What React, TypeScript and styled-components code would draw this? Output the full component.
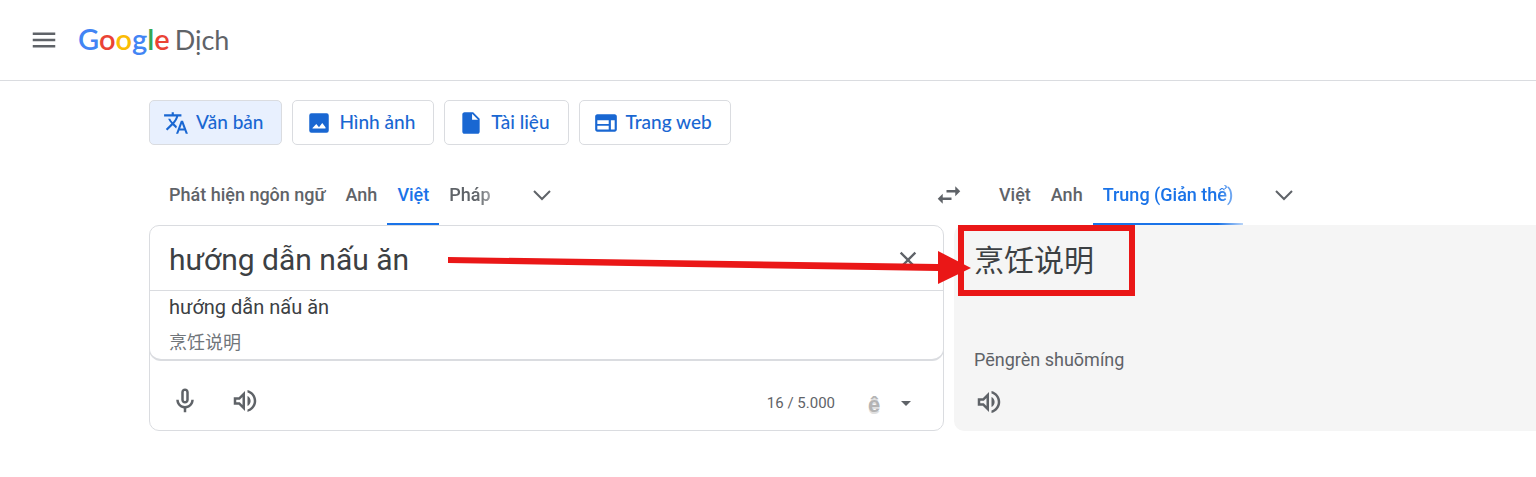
import React from 'react';
import styled, { createGlobalStyle } from 'styled-components';

const GlobalStyle = createGlobalStyle`
  *, *::before, *::after { box-sizing: border-box; }
  body {
    margin: 0;
    background: #fff;
    color: #3c4043;
    font-family: Roboto, 'Noto Sans CJK SC', sans-serif;
    overflow-x: hidden;
  }
  button, textarea { font-family: inherit; color: inherit; }
`;

const Header = styled.header`
  display: flex;
  align-items: center;
  gap: 19px;
  height: 81px;
  padding: 0 29px;
  border-bottom: 1px solid #dadce0;
`;

const IconButton = styled.button<{ $width?: number }>`
  display: flex;
  align-items: center;
  justify-content: center;
  width: ${(p) => p.$width ?? 30}px;
  height: 30px;
  padding: 0;
  border: 0;
  background: none;
  color: #5f6368;
  cursor: pointer;
`;

const Logo = styled.a`
  display: flex;
  align-items: baseline;
  gap: 5px;
  padding-bottom: 2px;
  color: #5f6368;
  font-family: Lato, sans-serif;
  font-size: 27px;
  line-height: 38px;
  text-decoration: none;
`;

const Brand = styled.span`
  font-size: 29px;
  font-weight: 600;
`;

const Letter = styled.span<{ $color: string }>`
  color: ${(p) => p.$color};
`;

const Main = styled.main`
  padding: 19px 0 40px 149px;
`;

const Modes = styled.nav`
  display: flex;
  gap: 10px;
`;

const ModeButton = styled.button<{ $active?: boolean }>`
  display: flex;
  align-items: center;
  gap: 7px;
  height: 45px;
  padding: 0 18px 0 13px;
  border: 1px solid #dadce0;
  border-radius: 5px;
  background: ${(p) => (p.$active ? '#e8f0fe' : '#fff')};
  color: #1967d2;
  font-family: Lato, sans-serif;
  font-size: 19px;
  font-weight: 500;
  white-space: nowrap;
  cursor: pointer;
`;

const ModeLabel = styled.span`
  padding-bottom: 2px;
`;

const Columns = styled.div`
  display: grid;
  grid-template-columns: 795fr 582fr;
  column-gap: 10px;
`;

const LanguageBar = styled.div<{ $start: number }>`
  display: flex;
  align-items: flex-end;
  height: 80px;
  padding-left: ${(p) => p.$start}px;
`;

const LanguageTab = styled.button<{ $active?: boolean; $fade?: boolean }>`
  height: 60px;
  padding: 0 10px;
  border: 0;
  border-bottom: 2px solid ${(p) => (p.$active ? '#1a73e8' : 'transparent')};
  background: none;
  color: ${(p) => (p.$active ? '#1a73e8' : '#5f6368')};
  font-size: 18px;
  font-weight: 500;
  white-space: nowrap;
  cursor: pointer;
  ${(p) => p.$fade && 'mask-image: linear-gradient(to right, #000 calc(100% - 25px), rgba(0, 0, 0, 0.3));'}
`;

const BarSlot = styled.div<{ $push?: boolean }>`
  display: flex;
  align-items: center;
  height: 60px;
  margin: ${(p) => (p.$push ? '0 -20px 0 auto' : '0 0 0 26px')};
`;

const Source = styled.section`
  display: flex;
  flex-direction: column;
  border: 1px solid #dadce0;
  border-radius: 10px;
`;

const InputRow = styled.div`
  display: flex;
  align-items: center;
  gap: 20px;
  height: 65px;
  padding: 4px 20px 0 19px;
  border-bottom: 1px solid #dadce0;
`;

const SourceText = styled.textarea`
  flex: 1;
  min-width: 0;
  height: 40px;
  padding: 0;
  border: 0;
  outline: 0;
  resize: none;
  overflow: hidden;
  background: none;
  font-size: 30px;
  line-height: 40px;
`;

const Suggestion = styled.button`
  display: flex;
  flex-direction: column;
  gap: 6px;
  height: 70px;
  margin: 0 -1px;
  padding: 2px 19px 0;
  border: 1px solid #dadce0;
  border-width: 0 1px 2px;
  border-radius: 0 0 12px 12px;
  background: #fff;
  text-align: left;
  font-size: 20px;
  line-height: 28px;
  cursor: pointer;
`;

const SuggestionHint = styled.span`
  color: #70757a;
  font-family: 'Noto Sans CJK SC', sans-serif;
  font-size: 18px;
  line-height: 28px;
`;

const Toolbar = styled.div`
  display: flex;
  align-items: center;
  height: 69px;
  padding: 10px 22px 0 20px;
`;

const ToolGroup = styled.div<{ $gap: number; $end?: boolean }>`
  display: flex;
  align-items: center;
  gap: ${(p) => p.$gap}px;
  margin-left: ${(p) => (p.$end ? 'auto' : 0)};
  padding-top: ${(p) => (p.$end ? 4 : 0)}px;
`;

const Counter = styled.span`
  color: #5f6368;
  font-size: 15px;
`;

const KeyboardGlyph = styled.span`
  padding-top: 4px;
  color: #b4b4b4;
  font-family: 'Liberation Sans', sans-serif;
  font-size: 22px;
  font-weight: 700;
  line-height: 20px;
  text-shadow: 0 2px 0 #e0e0e0;
`;

const Result = styled.section`
  position: relative;
  display: flex;
  flex-direction: column;
  padding: 13px 20px 14px;
  border-radius: 10px 0 0 10px;
  background: #f5f5f5;
`;

const Translation = styled.p`
  margin: 0;
  font-family: 'Noto Sans CJK SC', sans-serif;
  font-size: 30px;
  line-height: 40px;
`;

const Romanization = styled.p`
  margin: auto 0 15px;
  color: #5f6368;
  font-size: 18px;
  line-height: 24px;
`;

const Highlight = styled.div`
  position: absolute;
  top: 0;
  left: 4px;
  width: 177px;
  height: 71px;
  border: 6px solid #ea1717;
  pointer-events: none;
`;

const Arrow = styled.svg`
  position: absolute;
  top: 20px;
  left: -506px;
  pointer-events: none;
`;

const Glyph = styled.svg`
  flex-shrink: 0;
`;

const Icon = ({ path, size = 30 }: { path: string; size?: number }) => (
  <Glyph width={size} height={size} viewBox="0 0 24 24" fill="currentColor" fillRule="evenodd" aria-hidden="true">
    <path d={path} />
  </Glyph>
);

const icons = {
  menu: 'M3 18h18v-2H3v2zm0-5h18v-2H3v2zm0-7v2h18V6H3z',
  translate:
    'M12.87 15.07l-2.54-2.51.03-.03c1.74-1.94 2.98-4.17 3.71-6.53H17V4h-7V2H8v2H1v1.99h11.17C11.5 7.92 10.44 9.75 9 11.35 8.07 10.32 7.3 9.19 6.69 8h-2c.73 1.63 1.73 3.17 2.98 4.56l-5.09 5.02L4 19l5-5 3.11 3.11.76-2.04zM18.5 10h-2L12 22h2l1.12-3h4.75L21 22h2l-4.5-12zm-2.62 7l1.62-4.33L19.12 17h-3.24z',
  image:
    'M5 3h14a2 2 0 0 1 2 2v14a2 2 0 0 1-2 2H5a2 2 0 0 1-2-2V5a2 2 0 0 1 2-2zM6 17h12v-1l-3-4-3 4-2.500-3L6 16.500z',
  file: 'M6 2c-1.100 0-2 .9-2 2v16c0 1.100.9 2 2 2h12c1.100 0 2-.9 2-2V8l-6-6H6zm7 7V3.500L18.500 9H13z',
  web: 'M20 4H4c-1.100 0-2 .9-2 2v12c0 1.100.9 2 2 2h16c1.100 0 2-.9 2-2V6c0-1.100-.9-2-2-2zM14.500 18H4v-3.500h10.500V18zm0-5H4V9.500h10.500V13zM20 18h-3.500V9.500H20V18z',
  swap: 'M6.990 11L3 15l3.990 4v-3H14v-2H6.990v-3zM21 9l-3.990-4v3H10v2h7.010v3L21 9z',
  mic: 'M12 14c1.660 0 3-1.340 3-3V5c0-1.660-1.340-3-3-3S9 3.340 9 5v6c0 1.660 1.340 3 3 3zM11 5c0-.55.45-1 1-1s1 .45 1 1v6c0 .55-.45 1-1 1s-1-.45-1-1V5zM17 11c0 2.760-2.240 5-5 5s-5-2.240-5-5H5c0 3.530 2.610 6.430 6 6.920V21h2v-3.080c3.390-.49 6-3.390 6-6.920h-2z',
  speaker:
    'M3 9v6h4l5 5V4L7 9H3zm7-.17v6.34L7.830 13H5v-2h2.830L10 8.830zM16.500 12c0-1.770-1.020-3.290-2.500-4.030v8.050c1.480-.73 2.500-2.250 2.500-4.020zM14 3.230v2.060c2.890.86 5 3.540 5 6.710s-2.110 5.850-5 6.710v2.060c4.010-.91 7-4.490 7-8.770s-2.990-7.860-7-8.770z',
  caret: 'M7 10l5 5 5-5z',
  close: 'M19 6.410L17.590 5 12 10.590 6.410 5 5 6.410 10.590 12 5 17.590 6.410 19 12 13.410 17.590 19 19 17.590 13.410 12z',
};

const Chevron = () => (
  <svg width="18" height="12" viewBox="0 0 18 12" fill="none" stroke="currentColor" strokeWidth="2" aria-hidden="true">
    <path d="M1 2l8 8 8-8" />
  </svg>
);

const modes = [
  { label: 'Văn bản', icon: icons.translate, active: true },
  { label: 'Hình ảnh', icon: icons.image },
  { label: 'Tài liệu', icon: icons.file },
  { label: 'Trang web', icon: icons.web },
];

const brandLetters: [string, string][] = [
  ['G', '#4285f4'],
  ['o', '#ea4335'],
  ['o', '#fbbc04'],
  ['g', '#4285f4'],
  ['l', '#34a853'],
  ['e', '#ea4335'],
];

export default function App() {
  return (
    <>
      <GlobalStyle />
      <Header>
        <IconButton aria-label="Menu">
          <Icon path={icons.menu} />
        </IconButton>
        <Logo href="#">
          <Brand>
            {brandLetters.map(([letter, color], i) => (
              <Letter key={i} $color={color}>{letter}</Letter>
            ))}
          </Brand>
          <span>Dịch</span>
        </Logo>
      </Header>

      <Main>
        <Modes>
          {modes.map((m) => (
            <ModeButton key={m.label} $active={m.active}>
              <Icon path={m.icon} size={26} />
              <ModeLabel>{m.label}</ModeLabel>
            </ModeButton>
          ))}
        </Modes>

        <Columns>
          <LanguageBar $start={10}>
            <LanguageTab>Phát hiện ngôn ngữ</LanguageTab>
            <LanguageTab>Anh</LanguageTab>
            <LanguageTab $active>Việt</LanguageTab>
            <LanguageTab $fade>Pháp</LanguageTab>
            <BarSlot>
              <IconButton aria-label="Thêm ngôn ngữ nguồn"><Chevron /></IconButton>
            </BarSlot>
            <BarSlot $push>
              <IconButton aria-label="Hoán đổi ngôn ngữ">
                <Icon path={icons.swap} />
              </IconButton>
            </BarSlot>
          </LanguageBar>
          <LanguageBar $start={35}>
            <LanguageTab>Việt</LanguageTab>
            <LanguageTab>Anh</LanguageTab>
            <LanguageTab $active $fade>Trung (Giản thể)</LanguageTab>
            <BarSlot>
              <IconButton aria-label="Thêm ngôn ngữ đích"><Chevron /></IconButton>
            </BarSlot>
          </LanguageBar>

          <Source>
            <InputRow>
              <SourceText aria-label="Văn bản nguồn" rows={1} defaultValue="hướng dẫn nấu ăn" />
              <IconButton aria-label="Xóa văn bản nguồn">
                <Icon path={icons.close} size={28} />
              </IconButton>
            </InputRow>
            <Suggestion>
              <span>hướng dẫn nấu ăn</span>
              <SuggestionHint>烹饪说明</SuggestionHint>
            </Suggestion>
            <Toolbar>
              <ToolGroup $gap={30}>
                <IconButton aria-label="Dịch bằng giọng nói"><Icon path={icons.mic} /></IconButton>
                <IconButton aria-label="Nghe văn bản nguồn"><Icon path={icons.speaker} /></IconButton>
              </ToolGroup>
              <ToolGroup $gap={30} $end>
                <Counter>16 / 5.000</Counter>
                <ToolGroup $gap={8}>
                  <IconButton $width={18} aria-label="Công cụ nhập">
                    <KeyboardGlyph>ê</KeyboardGlyph>
                  </IconButton>
                  <IconButton aria-label="Chọn bàn phím"><Icon path={icons.caret} size={24} /></IconButton>
                </ToolGroup>
              </ToolGroup>
            </Toolbar>
          </Source>

          <Result>
            <Translation>烹饪说明</Translation>
            <Romanization>Pēngrèn shuōmíng</Romanization>
            <IconButton aria-label="Nghe bản dịch"><Icon path={icons.speaker} /></IconButton>
            <Highlight />
            <Arrow width="524" height="44" viewBox="0 0 524 44" fill="#ea1717" aria-hidden="true">
              <path d="M0 12L490 19V6L523 23L490 39V26L0 18z" />
            </Arrow>
          </Result>
        </Columns>
      </Main>
    </>
  );
}
